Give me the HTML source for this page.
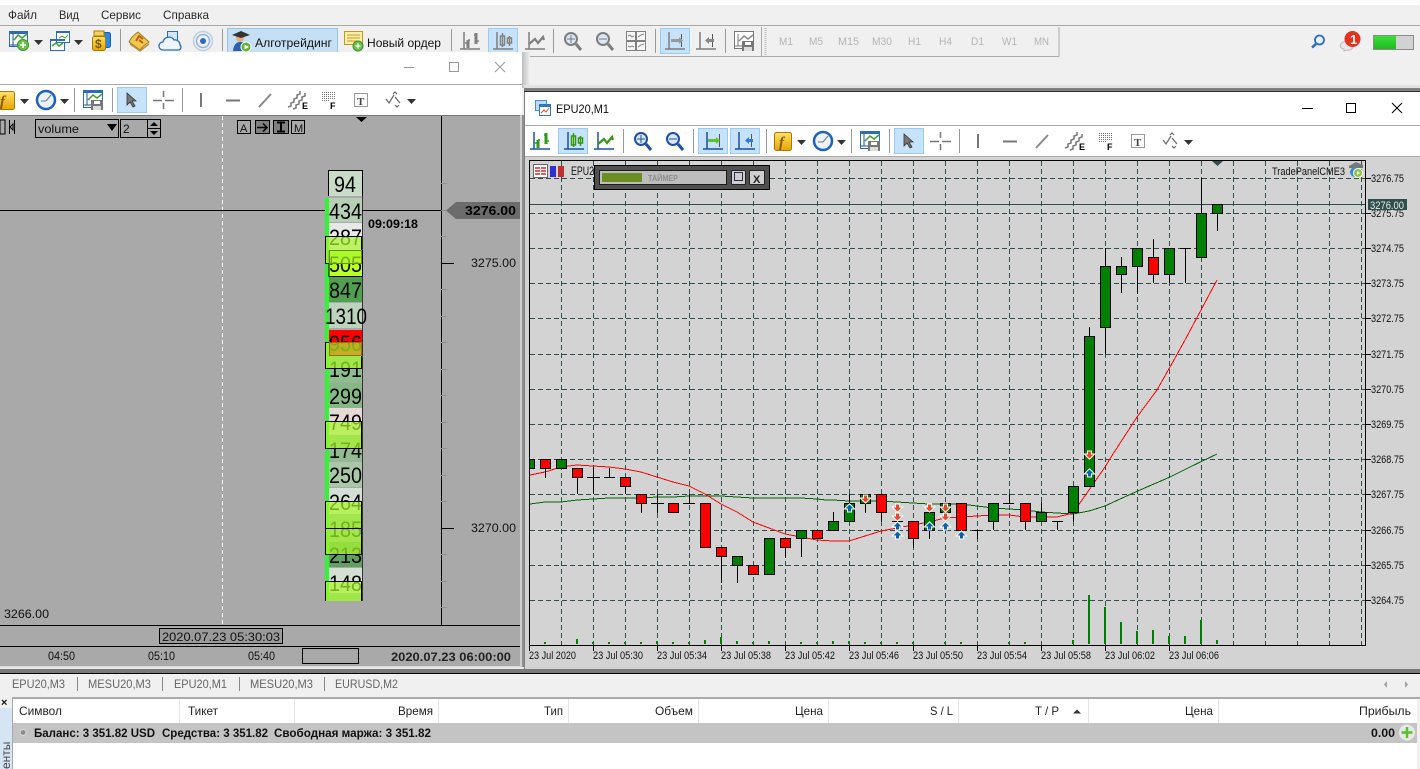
<!DOCTYPE html>
<html><head><meta charset="utf-8"><title>EPU20,M1</title>
<style>
html,body{margin:0;padding:0;background:#f0f0f0;overflow:hidden}
svg{display:block}
text{font-family:"Liberation Sans","Noto Sans CJK SC",sans-serif;font-size:12px;fill:#111}
.m{fill:#2a2a2a}
.tf{fill:#b4b4b4;font-size:11px}
.c{font-size:11px;fill:#111}
.tab{fill:#666;font-size:12px}
.l{font-size:22px;fill:#000}
.b{font-weight:bold}
.a{fill:none;stroke:var(--a)}
.g{fill:none;stroke:var(--g)}
.ic{--a:#1c50a8;--g:#2f9a12}
.dis{--a:#7d7d7d;--g:#808080}
</style></head><body>
<svg width="1420" height="769" viewBox="0 0 1420 769" xmlns="http://www.w3.org/2000/svg">
<defs>
<linearGradient id="sh" x1="0" x2="1" y1="0" y2="0"><stop offset="0" stop-color="#bdbdbd"/><stop offset="1" stop-color="#f0f0f0"/></linearGradient>
<linearGradient id="yl" x1="0" x2="0" y1="0" y2="1"><stop offset="0" stop-color="#ffe26a"/><stop offset="1" stop-color="#e8a400"/></linearGradient>
<linearGradient id="bt" x1="0" x2="0" y1="0" y2="1"><stop offset="0" stop-color="#3be03b"/><stop offset="1" stop-color="#22b822"/></linearGradient>
<clipPath id="lw"><rect x="0" y="52" width="522" height="617"/></clipPath>
<g id="i-bars"><path class="a" stroke-width="1.5" d="M4 1V18M0 18H20"/><path class="g" stroke-width="3" d="M8 9V17M16 2V13"/><path class="g" stroke-width="1.4" d="M5 12H8M8 9H10M14 4H16M16 10H19"/></g>
<g id="i-cand"><path class="a" stroke-width="1.5" d="M4 1V18M0 18H20"/><path class="g" stroke-width="1.5" d="M9.500 2V16M16.500 5V15M7.500 5h4v9h-4zM14.500 7h4v5h-4z" style="fill:#fff"/></g>
<g id="i-line"><path class="a" stroke-width="1.500" d="M4 1V18M0 18H20"/><path class="g" stroke-width="2.200" d="M4 13L10 8L13 12L18 6L19 9"/></g>
<g id="i-zp"><circle cx="7" cy="7" r="6" fill="#dbe9f7" stroke="var(--a)" stroke-width="2"/><path d="M12 12L17 18" stroke="var(--a)" stroke-width="3"/></g>
<g id="i-shift"><path class="a" stroke-width="1.500" d="M4 1V18M0 18H20"/><path stroke="#555" d="M16.500 3V16"/></g>
<g id="dn"><path d="M-1.500-3.500h3v3h2.500l-4 4-4-4h2.500z" fill="#e8482a" stroke="#fff" stroke-width="2" paint-order="stroke"/></g>
<g id="up"><path d="M-1.500 3.500h3v-3h2.500l-4-4-4 4h2.500z" fill="#0a62ad" stroke="#fff" stroke-width="2" paint-order="stroke"/></g>
<g id="tools">
<rect x="774.500" y="132.500" width="17" height="18" rx="2" fill="url(#yl)" stroke="#a87c00"/>
<path d="M797 140h9l-4.500 5z" fill="#333"/>
<circle cx="823" cy="141" r="9" fill="#eaf2fb" stroke="#1c62b8" stroke-width="2.500"/>
<path d="M823 142L828 136M823 142H818" stroke="#777" stroke-width="1" fill="none"/>
<path d="M837 140h9l-4.500 5z" fill="#333"/>
<path d="M851.500 129V153M889.500 129V153M959.500 129V153" stroke="#999"/>
<rect x="860.500" y="131.500" width="19" height="17" fill="#fff" stroke="#2b6cb8"/><rect x="860" y="131" width="20" height="3" fill="#2b6cb8"/>
<path d="M864 134V146M861 146H868" stroke="#1c50a8" fill="none"/>
<path d="M865 141L870 136L874 139L879 135" stroke="#3fa02a" stroke-width="1.500" fill="none"/>
<rect x="868" y="141" width="12" height="10" fill="#777"/><rect x="871" y="142" width="6" height="3" fill="#fff"/><rect x="870" y="147" width="8" height="4" fill="#ddd"/>
<rect x="894.500" y="128.500" width="29" height="25" fill="#c7e3fb" stroke="#96ccf6"/>
<path d="M904 134V146L907 143L910 148L912 147L909 142H913z" fill="#777" stroke="#333" stroke-width=".8"/>
<path d="M940.500 132V138M940.500 144V150M930 141.500H939M942 141.500H951" stroke="#777" stroke-width="1.500" fill="none"/>
<path d="M978 134V148" stroke="#777" stroke-width="2"/>
<path d="M1003 141.500H1017" stroke="#777" stroke-width="2"/>
<path d="M1036 148L1048 135" stroke="#888" stroke-width="2"/>
<path d="M1065 148l3-1v-3l3-1v-3l3-1v-3l3-1v-3M1070 150l3-1v-3l3-1v-3l3-1v-3l3-1v-3" stroke="#777" stroke-width="1.500" fill="none"/>
<path d="M1099 133.500h14M1099 135.500h14M1099 137.500h14M1099 139.500h14M1099 141.500h8" stroke="#777" stroke-dasharray="1 1" fill="none"/>
<rect x="1131.500" y="134.500" width="13" height="13" fill="none" stroke="#333" stroke-dasharray="1 1"/>
<path d="M1163 140l3 4 5-8M1170 135l2-2 2 2M1172 146l2 2 2-2M1172 138l5 6" stroke="#666" stroke-width="1.200" fill="none"/>
<path d="M1184 140h9l-4.500 5z" fill="#333"/>
</g>
</defs>

<rect width="1420" height="769" fill="#f0f0f0"/>
<rect width="1420" height="5" fill="#fff"/>

<!-- menu -->
<text class="m" x="8" y="19" textLength="29" lengthAdjust="spacingAndGlyphs">Файл</text>
<text class="m" x="59" y="19" textLength="20" lengthAdjust="spacingAndGlyphs">Вид</text>
<text class="m" x="101" y="19" textLength="40" lengthAdjust="spacingAndGlyphs">Сервис</text>
<text class="m" x="163" y="19" textLength="46" lengthAdjust="spacingAndGlyphs">Справка</text>
<rect y="25" width="1420" height="1" fill="#a8a8a8"/>

<!-- main toolbar -->
<g class="ic">
<rect x="9.500" y="31.500" width="18" height="15" fill="#fff" stroke="#2b6cb8"/><rect x="9" y="31" width="19" height="3" fill="#2b6cb8"/>
<path d="M13 33V46M10 45H26" stroke="#1c50a8" fill="none"/><path d="M14 40L18 35L22 38L27 34" stroke="#3fa02a" stroke-width="1.500" fill="none"/>
<circle cx="23" cy="45" r="5.500" fill="#6cc24a" stroke="#3f8f2a"/><path d="M23 42V48M20 45H26" stroke="#fff" stroke-width="1.500"/>
<path d="M34 40h9l-4.500 5z" fill="#333"/>
<rect x="50.500" y="39.500" width="14" height="11" fill="#fff" stroke="#2b6cb8"/><rect x="56.500" y="31.500" width="13" height="11" fill="#fff" stroke="#2b6cb8"/><rect x="50" y="39" width="15" height="2" fill="#2b6cb8"/><rect x="56" y="31" width="14" height="2" fill="#2b6cb8"/>
<path d="M52 46L56 43L59 46L63 43" stroke="#3fa02a" stroke-width="1.500" fill="none"/><path d="M59 38L62 36L65 38L68 35" stroke="#3fa02a" fill="none"/>
<path d="M74 40h9l-4.500 5z" fill="#333"/>
<rect x="99.500" y="32.500" width="11" height="15" rx="2" fill="#2a8ae0" stroke="#1c5fa8"/>
<rect x="92.500" y="36.500" width="13" height="14" rx="2" fill="url(#yl)" stroke="#a87c00"/><text x="95" y="48" class="b" style="font-size:12px;fill:#7a5a00">$</text>
<rect x="94" y="31" width="10" height="5" fill="#f3cf6a" stroke="#a87c00"/>
<path d="M120.500 29V51" stroke="#999"/>
<path d="M129 42Q131 37 138 32L149 42Q143 46 140 50z" fill="#f0c850" stroke="#9a7a20"/><path d="M130 44L140 51L149 44" stroke="#b89048" stroke-width="1.500" fill="none"/><path d="M136 41L139 36L143 39M139 40L143 43" stroke="#c05a10" stroke-width="1.800" fill="none"/>
<rect x="167.500" y="31.500" width="10" height="13" fill="#d3e6f8" stroke="#2b6cb8"/><path d="M163 50a4 4 0 0 1 0-8a6 6 0 0 1 11-2a5 5 0 0 1 6 5a3 3 0 0 1-1 5z" fill="#eef5fc" stroke="#2b6cb8" stroke-width="1.300"/>
<circle cx="203" cy="41" r="9.500" fill="none" stroke="#b8cfe8" stroke-width="1.500"/><circle cx="203" cy="41" r="6.500" fill="none" stroke="#8fb3da" stroke-width="1.500"/><circle cx="203" cy="41" r="3" fill="#2b6cb8"/>
<path d="M222.500 29V51" stroke="#999"/>
<rect x="227.500" y="28.500" width="110" height="24" fill="#c5dff4" stroke="#94c6ec"/>
<path d="M233 51q1-9 7-9t8 6v3z" fill="#2b5fb0"/><circle cx="240" cy="38" r="4" fill="#e0b080"/><path d="M232 35L241 31L250 35L241 38z" fill="#333"/>
<circle cx="246" cy="47" r="5" fill="#5fb52a" stroke="#fff"/><path d="M244.500 44.500L249 47L244.500 49.500z" fill="#fff"/>
<text x="255" y="47" textLength="77" lengthAdjust="spacingAndGlyphs" style="fill:#111">Алготрейдинг</text>
<rect x="344.500" y="31.500" width="18" height="13" fill="#fff0a8" stroke="#c09a20"/><path d="M347 35h13M347 38h13M347 41h10" stroke="#c89a20"/>
<circle cx="358" cy="46" r="5" fill="#6cc24a" stroke="#3f8f2a"/><path d="M358 43.500V48.500M355.500 46H360.500" stroke="#fff" stroke-width="1.300"/>
<text x="367" y="47" textLength="74" lengthAdjust="spacingAndGlyphs" style="fill:#111">Новый ордер</text>
<path d="M451.500 29V51M553.500 29V53M655.500 29V53M725.500 29V53" stroke="#999"/>
<g class="dis">
<use href="#i-bars" x="460" y="31"/>
<rect x="488.500" y="28.500" width="29" height="25" fill="#c7e3fb" stroke="#96ccf6"/>
<use href="#i-cand" x="493" y="31"/>
<use href="#i-line" x="525" y="31"/>
<use href="#i-zp" x="564" y="32"/><path d="M571 35V43M567 39H575" stroke="#777"/>
<use href="#i-zp" x="596" y="32"/><path d="M599 39H607" stroke="#777"/>
<g fill="#f6f6f6" stroke="#808080"><rect x="626.500" y="31.500" width="9" height="9"/><rect x="636.500" y="31.500" width="9" height="9"/><rect x="626.500" y="41.500" width="9" height="9"/><rect x="636.500" y="41.500" width="9" height="9"/></g>
<path d="M628 36l2-1 2 2 2-1M638 37l3-2 3-1M628 46l2 1 2-1 2 1M638 47l3-2 3-1" stroke="#888" fill="none"/>
<rect x="660.500" y="28.500" width="29" height="25" fill="#c7e3fb" stroke="#96ccf6"/>
<use href="#i-shift" x="665" y="31"/><path d="M671 39h8v-2l4 3.500-4 3.500v-2h-8z" fill="#999"/>
<use href="#i-shift" x="696" y="31"/><path d="M714 39h-5v-2l-4 3.500 4 3.500v-2h5z" fill="#888"/>
<rect x="734.500" y="31.500" width="19" height="17" fill="#fff" stroke="#777"/><path d="M738 34V46M735 46H742" stroke="#777"/><path d="M739 41L744 36L748 39L753 35" stroke="#888" stroke-width="1.500" fill="none"/><rect x="742" y="41" width="12" height="10" fill="#777"/><rect x="745" y="42" width="6" height="3" fill="#fff"/><rect x="744" y="47" width="8" height="4" fill="#ddd"/>
</g>
</g>
<path d="M765.500 28V55" stroke="#bbb" stroke-dasharray="1 1" stroke-width="2"/>
<path d="M761.500 27V56M1059 27V56.500" stroke="#aaa" fill="none"/>
<rect y="56" width="1059" height="1" fill="#aaa"/>
<text class="tf" x="779" y="45" textLength="14" lengthAdjust="spacingAndGlyphs">M1</text><text class="tf" x="809" y="45" textLength="14" lengthAdjust="spacingAndGlyphs">M5</text><text class="tf" x="838" y="45" textLength="21" lengthAdjust="spacingAndGlyphs">M15</text><text class="tf" x="872" y="45" textLength="20" lengthAdjust="spacingAndGlyphs">M30</text><text class="tf" x="908" y="45" textLength="13" lengthAdjust="spacingAndGlyphs">H1</text><text class="tf" x="939" y="45" textLength="13" lengthAdjust="spacingAndGlyphs">H4</text><text class="tf" x="971" y="45" textLength="13" lengthAdjust="spacingAndGlyphs">D1</text><text class="tf" x="1002" y="45" textLength="15" lengthAdjust="spacingAndGlyphs">W1</text><text class="tf" x="1034" y="45" textLength="15" lengthAdjust="spacingAndGlyphs">MN</text>
<circle cx="1319.500" cy="40" r="4.500" fill="#eaf2fb" stroke="#2b6cc8" stroke-width="1.800"/><path d="M1316 44L1312 47.500" stroke="#2b6cc8" stroke-width="2.500"/>
<path d="M1340 46a8 6 0 0 1 14-3a6 6 0 0 1-7 7l-3 1v-2a5 5 0 0 1-4-3z" fill="#e8e8e8" stroke="#bbb"/>
<circle cx="1352.500" cy="39" r="8" fill="#e4321c"/><text x="1350" y="44" class="b" style="font-size:13px;fill:#fff">1</text>
<rect x="1373.500" y="35.500" width="40" height="14" fill="#d2d2d2" stroke="#8a8a8a"/><rect x="1374" y="36" width="22" height="13" fill="url(#bt)"/>

<!-- shadows -->
<rect x="522" y="52" width="8" height="36" fill="url(#sh)"/>
<rect x="524" y="85" width="896" height="3" fill="#e2e2e2"/>

<!-- LEFT WINDOW -->
<g clip-path="url(#lw)">
<rect x="0" y="52" width="522" height="32" fill="#fff"/>
<rect x="0" y="84" width="522" height="1" fill="#aaa"/>
<rect x="0" y="85" width="522" height="30" fill="#fff"/>
<path d="M404 67.500H414" stroke="#999"/><rect x="449.500" y="62.500" width="9" height="9" fill="none" stroke="#999"/><path d="M495 62L505 72M505 62L495 72" stroke="#999"/>
<rect x="0" y="115" width="522" height="553" fill="#a9a9a9"/>
<rect x="0" y="115" width="522" height="1" fill="#777"/>
<g class="ic" transform="translate(-777,-41)"><use href="#tools"/></g>
<text x="0" y="106" style="font:italic bold 15px 'Liberation Serif',serif;fill:#8a5a00">f</text>
<text x="302" y="109" class="b" style="font-size:9px;fill:#000">E</text><text x="330" y="109" class="b" style="font-size:9px;fill:#000">F</text>
<text x="357" y="105" class="b" style="font:bold 11px 'Liberation Serif',serif;fill:#444">T</text>

<!-- top left controls -->
<rect x="0" y="120" width="5" height="14" fill="none" stroke="#000"/><path d="M9.500 120V134M14.500 120V134M13 124l-3 3 3 3z" stroke="#000" fill="none"/>
<rect x="35.500" y="119.500" width="83" height="18" fill="#a9a9a9" stroke="#000"/>
<text x="38" y="133" textLength="41" lengthAdjust="spacingAndGlyphs" style="font-size:12px;fill:#111">volume</text>
<path d="M107 124h10l-5 7z" fill="#000"/>
<rect x="120.500" y="119.500" width="40" height="18" fill="#a9a9a9" stroke="#000"/>
<text x="123" y="133" style="font-size:12px;fill:#111">2</text>
<path d="M147.500 120V137M148 128.500H160" stroke="#000"/><path d="M150 126l4-4 4 4zM150 131l4 4 4-4z" fill="#000"/>
<g fill="#a9a9a9" stroke="#000"><rect x="237.500" y="120.500" width="13" height="13"/><rect x="255.500" y="120.500" width="14" height="13" fill="#808080"/><rect x="273.500" y="120.500" width="15" height="13" fill="#808080"/><rect x="291.500" y="120.500" width="13" height="13"/></g>
<text x="240" y="132" style="font-size:11px;fill:#111">A</text>
<path d="M257 127.500H267M263 123.500l4 4-4 4" stroke="#000" stroke-width="1.500" fill="none"/>
<path d="M277 122.500H285M277 131.500H285M281 122.500V131.500" stroke="#000" stroke-width="2" fill="none"/>
<text x="294" y="132" style="font-size:11px;fill:#111">M</text>
<path d="M356 117h11l-5.500 5z" fill="#000"/>

<path d="M222.500 116V625" stroke="#fff" stroke-dasharray="4 3"/>
<rect x="0" y="210" width="441" height="1" fill="#000"/>
<rect x="441" y="116" width="1" height="509" fill="#000"/>
<path d="M441 263.500H454M441 528.500H454" stroke="#000"/>
<path d="M441 183.500h6M441 210.500h6M441 236.500h6M441 289.500h6M441 316.500h6M441 342.500h6M441 369.500h6M441 395.500h6M441 422.500h6M441 448.500h6M441 475.500h6M441 501.500h6M441 554.500h6M441 581.500h6M441 607.500h6" stroke="#8f8f8f"/>
<path d="M446 210.500L456 202H520V219H456z" fill="#6c6c6c"/>
<text x="465" y="215" textLength="51" lengthAdjust="spacingAndGlyphs" class="b" style="font-size:13px;fill:#000">3276.00</text>
<text x="368" y="228" textLength="50" lengthAdjust="spacingAndGlyphs" class="b" style="font-size:12px;fill:#000">09:09:18</text>
<text x="471" y="267" textLength="45" lengthAdjust="spacingAndGlyphs" style="fill:#111">3275.00</text>
<text x="471" y="532" textLength="45" lengthAdjust="spacingAndGlyphs" style="fill:#111">3270.00</text>
<text x="4" y="618" textLength="45" lengthAdjust="spacingAndGlyphs" style="fill:#111">3266.00</text>

<!-- ladder -->
<rect x="325" y="198" width="4" height="403" fill="#33f433"/>
<g>
<rect x="329" y="171" width="33" height="25" fill="#c8dcc8"/>
<rect x="329" y="198" width="33" height="24" fill="#b5d0b5"/>
<rect x="329" y="223" width="33" height="27" fill="#e8e8e8"/>
<rect x="329" y="250" width="33" height="26" fill="#b8ff24"/>
<rect x="329" y="277" width="33" height="25" fill="#50a050"/>
<rect x="329" y="303" width="33" height="25" fill="#bcd4bc"/>
<rect x="329" y="330" width="33" height="25" fill="#ff0000"/>
<rect x="329" y="356" width="33" height="26" fill="#8dbe8d"/>
<rect x="329" y="383" width="33" height="25" fill="#86b886"/>
<rect x="329" y="408" width="33" height="27" fill="#e8d8d8"/>
<rect x="329" y="436" width="33" height="25" fill="#90bc90"/>
<rect x="329" y="462" width="33" height="25" fill="#a8c8a8"/>
<rect x="329" y="488" width="33" height="26" fill="#d5e0d5"/>
<rect x="329" y="515" width="33" height="26" fill="#8dbe8d"/>
<rect x="329" y="542" width="33" height="25" fill="#5fa25f"/>
<rect x="329" y="568" width="33" height="25" fill="#d5e0d5"/>
<rect x="329" y="594" width="33" height="7" fill="#8dbe8d"/>
</g>
<path d="M328.500 196V170.500H362.500V196M329 250.500V276.500H362.500V250" fill="none" stroke="#000"/>
<path d="M362.500 196V601" stroke="#000" stroke-opacity=".7"/>
<text class="l" x="334" y="192" textLength="22" lengthAdjust="spacingAndGlyphs">94</text>
<text class="l" x="329" y="219" textLength="33" lengthAdjust="spacingAndGlyphs">434</text>
<text class="l" x="329" y="245" textLength="33" lengthAdjust="spacingAndGlyphs">287</text>
<text class="l" x="329" y="272" textLength="33" lengthAdjust="spacingAndGlyphs">505</text>
<text class="l" x="329" y="298" textLength="33" lengthAdjust="spacingAndGlyphs">847</text>
<text class="l" x="325" y="324" textLength="42" lengthAdjust="spacingAndGlyphs">1310</text>
<text class="l" x="329" y="351" textLength="33" lengthAdjust="spacingAndGlyphs">956</text>
<text class="l" x="329" y="377" textLength="33" lengthAdjust="spacingAndGlyphs">191</text>
<text class="l" x="329" y="404" textLength="33" lengthAdjust="spacingAndGlyphs">299</text>
<text class="l" x="329" y="430" textLength="33" lengthAdjust="spacingAndGlyphs">749</text>
<text class="l" x="329" y="458" textLength="33" lengthAdjust="spacingAndGlyphs">174</text>
<text class="l" x="329" y="483" textLength="33" lengthAdjust="spacingAndGlyphs">250</text>
<text class="l" x="329" y="510" textLength="33" lengthAdjust="spacingAndGlyphs">264</text>
<text class="l" x="329" y="537" textLength="33" lengthAdjust="spacingAndGlyphs">185</text>
<text class="l" x="329" y="563" textLength="33" lengthAdjust="spacingAndGlyphs">213</text>
<text class="l" x="329" y="591" textLength="33" lengthAdjust="spacingAndGlyphs">148</text>
<text class="l" x="329" y="617" textLength="33" lengthAdjust="spacingAndGlyphs">183</text>
<rect x="300" y="601" width="80" height="24" fill="#a9a9a9"/>
<g fill="#a8f82e" fill-opacity=".7" stroke="#000">
<rect x="325.500" y="236.500" width="36" height="27"/>
<rect x="325.500" y="342.500" width="36" height="26"/>
<rect x="325.500" y="421.500" width="36" height="27"/>
<rect x="325.500" y="501.500" width="36" height="27"/>
<rect x="325.500" y="528.500" width="36" height="26"/>
</g>
<rect x="326" y="582" width="36" height="19" fill="#a8f82e" fill-opacity=".7"/>
<path d="M325.500 601V581.500H361.500V601" fill="none" stroke="#000"/>
<rect x="329.500" y="250.500" width="32" height="13" fill="none" stroke="#6e8a10"/>
<rect x="329.500" y="342.500" width="32" height="13" fill="none" stroke="#a06a10"/>

<!-- left bottom -->
<rect x="0" y="625" width="522" height="1" fill="#000"/>
<rect x="0" y="646" width="522" height="1" fill="#000"/>
<rect x="159.500" y="628.500" width="123" height="15" fill="#9a9a9a" stroke="#000"/>
<text x="162" y="641" textLength="118" lengthAdjust="spacingAndGlyphs" style="fill:#111">2020.07.23 05:30:03</text>
<text x="48" y="660" textLength="27" lengthAdjust="spacingAndGlyphs" style="fill:#111">04:50</text>
<text x="148" y="660" textLength="27" lengthAdjust="spacingAndGlyphs" style="fill:#111">05:10</text>
<text x="248" y="660" textLength="27" lengthAdjust="spacingAndGlyphs" style="fill:#111">05:40</text>
<rect x="302.500" y="648.500" width="56" height="15" fill="none" stroke="#000"/>
<text x="391" y="661" textLength="120" lengthAdjust="spacingAndGlyphs" class="b" style="font-size:12px;fill:#222">2020.07.23 06:00:00</text>
<rect x="0" y="666" width="522" height="3" fill="#d8d8d8"/>
<rect x="520" y="115" width="2" height="553" fill="#cfcfcf"/>
</g>
<rect x="522" y="115" width="2" height="554" fill="#8f8f8f"/>

<!-- RIGHT WINDOW -->
<rect x="524" y="88" width="896" height="3" fill="#808080"/>
<rect x="524" y="91" width="896" height="1" fill="#333"/>
<rect x="524" y="92" width="896" height="577" fill="#fff"/>
<rect x="524" y="92" width="1" height="577" fill="#808080"/>
<rect x="525" y="125" width="895" height="1" fill="#aaa"/>
<rect x="525" y="156" width="895" height="1" fill="#aaa"/>
<rect x="525" y="157" width="895" height="512" fill="#d3d3d3"/>
<rect x="535.500" y="100.500" width="11" height="10" fill="#bcdcf6" stroke="#4a90d0"/><rect x="539.500" y="104.500" width="11" height="11" fill="#fff" stroke="#2b78c8"/><rect x="539" y="104" width="12" height="3" fill="#2b78c8"/><path d="M541 113l3-3 2 2 3-4" stroke="#e8502a" fill="none"/>
<text x="556" y="113" textLength="53" lengthAdjust="spacingAndGlyphs" style="fill:#111">EPU20,M1</text>
<path d="M1302 108.500H1313" stroke="#000"/><rect x="1346.500" y="103.500" width="9" height="9" fill="none" stroke="#000"/><path d="M1392 103L1402 113M1402 103L1392 113" stroke="#000"/>

<g class="ic">
<use href="#i-bars" x="530" y="131"/>
<rect x="558.500" y="128.500" width="29" height="25" fill="#c7e3fb" stroke="#96ccf6"/>
<use href="#i-cand" x="564" y="131"/>
<use href="#i-line" x="594" y="131"/>
<path d="M623.500 129V153M693.500 129V153M766.500 129V153" stroke="#999"/>
<use href="#i-zp" x="634" y="132"/><path d="M641 135V143M637 139H645" stroke="#1c50a8"/>
<use href="#i-zp" x="666" y="132"/><path d="M669 139H677" stroke="#1c50a8"/>
<rect x="698.500" y="128.500" width="29" height="25" fill="#c7e3fb" stroke="#96ccf6"/>
<use href="#i-shift" x="703" y="131"/><path d="M708 139h8v-2l4 3.500-4 3.500v-2h-8z" fill="#5cc22a"/>
<rect x="730.500" y="128.500" width="29" height="25" fill="#c7e3fb" stroke="#96ccf6"/>
<use href="#i-shift" x="735" y="131"/><path d="M753 139h-4v-2l-4 3.500 4 3.500v-2h4z" fill="#2b7ce0"/>
<use href="#tools"/>
</g>
<text x="779" y="147" style="font:italic bold 15px 'Liberation Serif',serif;fill:#8a5a00">f</text>
<text x="1079" y="150" class="b" style="font-size:9px;fill:#000">E</text><text x="1107" y="150" class="b" style="font-size:9px;fill:#000">F</text>
<text x="1134" y="146" class="b" style="font:bold 11px 'Liberation Serif',serif;fill:#444">T</text>

<!-- chart -->
<g shape-rendering="crispEdges">
<path stroke="#2f4f4f" stroke-dasharray="5 3" fill="none" d="M530 178.500H1365M530 213.500H1365M530 248.500H1365M530 283.500H1365M530 318.500H1365M530 354.500H1365M530 389.500H1365M530 424.500H1365M530 459.500H1365M530 494.500H1365M530 530.500H1365M530 565.500H1365M530 600.500H1365M561.500 161V645M593.500 161V645M625.500 161V645M657.500 161V645M689.500 161V645M721.500 161V645M753.500 161V645M785.500 161V645M817.500 161V645M849.500 161V645M881.500 161V645M913.500 161V645M945.500 161V645M977.500 161V645M1009.500 161V645M1041.500 161V645M1073.500 161V645M1105.500 161V645M1137.500 161V645M1169.500 161V645M1201.500 161V645M1233.500 161V645M1265.500 161V645M1297.500 161V645M1329.500 161V645M1361.500 161V645"/>
<path stroke="#2f4f4f" d="M530 204.500H1365"/>
<path stroke="#000" fill="none" d="M529.500 160.500H1365.500V645.500H529.500z"/>
<path stroke="#000" d="M1365 178.500h6M1365 213.500h6M1365 248.500h6M1365 283.500h6M1365 318.500h6M1365 354.500h6M1365 389.500h6M1365 424.500h6M1365 459.500h6M1365 494.500h6M1365 530.500h6M1365 565.500h6M1365 600.500h6M529.500 645v6M593.500 645v6M657.500 645v6M721.500 645v6M785.500 645v6M849.500 645v6M913.500 645v6M977.500 645v6M1041.500 645v6M1105.500 645v6M1169.500 645v6"/>
<!-- volumes -->
<path stroke="#008000" stroke-width="2" d="M545 644v-2M577 644v-5M593 644v-2M609 644v-2M625 644v-2M641 644v-2M657 644v-3M673 644v-2M689 644v-2M705 644v-4M721 644v-7M737 644v-3M753 644v-2M769 644v-3M801 644v-2M817 644v-2M833 644v-3M849 644v-3M865 644v-2M881 644v-2M897 644v-2M913 644v-2M945 644v-2M961 644v-2M1009 644v-2M1025 644v-2M1073 644v-4M1089 644V595M1105 644V607M1121 644V622M1137 644V631M1153 644V630M1169 644V636M1185 644V636M1201 644V620M1217 644V640"/>
</g>
<!-- MAs -->
<polyline fill="none" stroke="#006400" shape-rendering="crispEdges" points="530,504 545,502 561,502 577,500 593,499 609,498 625,498 641,498 657,497 673,497 689,496 705,496 721,496 737,497 753,498 769,498 785,498 801,498 817,499 826,500 833,500 849,501 865,501 881,501 897,502 913,503 929,504 945,504 961,504 977,506 993,508 1009,509 1025,510 1041,512 1057,513 1073,514 1089,511 1105,506 1120,499 1140,490 1170,477 1190,467 1217,454"/>
<polyline fill="none" stroke="#ff0000" shape-rendering="crispEdges" points="530,475 545,472 561,467 577,465 593,466 609,467 625,469 641,472 657,477 673,482 689,486 705,494 721,504 737,512 753,522 769,528 785,534 801,537 817,540 833,541 849,541 865,536 881,531 897,528 913,525 929,522 945,518 961,517 977,516 993,515 1009,515 1025,517 1041,517 1057,517 1073,513 1089,490 1105,467 1113,454 1137,417 1157,390 1170,367 1185,340 1201,310 1217,280"/>
<g shape-rendering="crispEdges">
<path stroke="#000" fill="none" d="M545.500 468V478M577.500 477V494M593.500 467V494M587 477.500H600M609.500 468V477M604 477.500H615M625.500 486V494M641.500 503V513M657.500 494V513M651 503.500H664M689.500 494V503M683 503.500H695M721.500 556V583M737.500 565V583M785.500 547V558M801.500 538V557M833.500 512V521M849.500 494V503M865.500 503V513M881.500 512V522M892 521.500H903M913.500 538V548M929.500 530V539M977.500 530V539M972 530.500H983M993.500 521V530M1009.500 494V503M1003 503.500H1014M1025.500 521V530M1041.500 502V512M1057.500 521V530M1052 521.500H1063M1073.500 512V522M1089.500 327V336M1105.500 248V266M1105.500 327V354M1121.500 257V266M1121.500 274V293M1137.500 266V294M1153.500 239V257M1153.500 274V283M1169.500 274V283M1185.500 248V283M1180 248.500H1191M1201.500 178V213M1217.500 213V231"/>
<path stroke="#000" fill="#ff0000" d="M540.500 459.500h10v9h-10zM572.500 468.500h10v9h-10zM620.500 477.500h10v9h-10zM636.500 494.500h10v9h-10zM668.500 503.500h10v9h-10zM700.500 503.500h10v44h-10zM716.500 547.500h10v9h-10zM748.500 565.500h10v9h-10zM780.500 538.500h10v9h-10zM812.500 530.500h10v8h-10zM876.500 494.500h10v18h-10zM908.500 521.500h10v17h-10zM956.500 503.500h10v27h-10zM1020.500 503.500h10v18h-10zM1148.500 257.500h10v17h-10z"/>
<path stroke="#000" fill="#008000" d="M529.500 459.500h5v9h-5zM556.500 459.500h10v9h-10zM732.500 556.500h10v9h-10zM764.500 538.500h10v36h-10zM796.500 530.500h10v8h-10zM828.500 521.500h10v9h-10zM844.500 503.500h10v18h-10zM860.500 494.500h10v9h-10zM924.500 512.500h10v18h-10zM940.500 503.500h10v9h-10zM988.500 503.500h10v18h-10zM1036.500 512.500h10v9h-10zM1068.500 486.500h10v26h-10zM1084.500 336.500h10v150h-10zM1100.500 266.500h10v61h-10zM1116.500 266.500h10v8h-10zM1132.500 248.500h10v18h-10zM1164.500 248.500h10v26h-10zM1196.500 213.500h10v44h-10zM1212.500 204.500h10v9h-10z"/>
</g>
<use href="#up" x="849.500" y="508"/>
<use href="#dn" x="865.500" y="499"/>
<use href="#dn" x="897.500" y="508"/><use href="#dn" x="897.500" y="517"/><use href="#up" x="897.500" y="526"/><use href="#up" x="897.500" y="535"/>
<use href="#dn" x="929.500" y="508"/><use href="#up" x="929.500" y="526"/>
<use href="#dn" x="945.500" y="508"/><use href="#dn" x="945.500" y="517"/><use href="#up" x="945.500" y="526"/>
<use href="#up" x="961.500" y="535"/>
<use href="#dn" x="1089.500" y="455"/><use href="#up" x="1089.500" y="473"/>

<!-- price axis -->
<text class="c" x="1371" y="182" textLength="33" lengthAdjust="spacingAndGlyphs">3276.75</text>
<text class="c" x="1371" y="217" textLength="33" lengthAdjust="spacingAndGlyphs">3275.75</text>
<text class="c" x="1371" y="252" textLength="33" lengthAdjust="spacingAndGlyphs">3274.75</text>
<text class="c" x="1371" y="287" textLength="33" lengthAdjust="spacingAndGlyphs">3273.75</text>
<text class="c" x="1371" y="322" textLength="33" lengthAdjust="spacingAndGlyphs">3272.75</text>
<text class="c" x="1371" y="358" textLength="33" lengthAdjust="spacingAndGlyphs">3271.75</text>
<text class="c" x="1371" y="393" textLength="33" lengthAdjust="spacingAndGlyphs">3270.75</text>
<text class="c" x="1371" y="428" textLength="33" lengthAdjust="spacingAndGlyphs">3269.75</text>
<text class="c" x="1371" y="463" textLength="33" lengthAdjust="spacingAndGlyphs">3268.75</text>
<text class="c" x="1371" y="498" textLength="33" lengthAdjust="spacingAndGlyphs">3267.75</text>
<text class="c" x="1371" y="534" textLength="33" lengthAdjust="spacingAndGlyphs">3266.75</text>
<text class="c" x="1371" y="569" textLength="33" lengthAdjust="spacingAndGlyphs">3265.75</text>
<text class="c" x="1371" y="604" textLength="33" lengthAdjust="spacingAndGlyphs">3264.75</text>
<rect x="1368" y="199" width="39" height="11" fill="#2f4f4f"/>
<text x="1370" y="209" textLength="34" lengthAdjust="spacingAndGlyphs" style="font-size:11px;fill:#e8e8e8">3276.00</text>
<!-- time axis -->
<text class="c" x="529" y="659" textLength="47" lengthAdjust="spacingAndGlyphs">23 Jul 2020</text>
<text class="c" x="593" y="659" textLength="50" lengthAdjust="spacingAndGlyphs">23 Jul 05:30</text>
<text class="c" x="657" y="659" textLength="50" lengthAdjust="spacingAndGlyphs">23 Jul 05:34</text>
<text class="c" x="721" y="659" textLength="50" lengthAdjust="spacingAndGlyphs">23 Jul 05:38</text>
<text class="c" x="785" y="659" textLength="50" lengthAdjust="spacingAndGlyphs">23 Jul 05:42</text>
<text class="c" x="849" y="659" textLength="50" lengthAdjust="spacingAndGlyphs">23 Jul 05:46</text>
<text class="c" x="913" y="659" textLength="50" lengthAdjust="spacingAndGlyphs">23 Jul 05:50</text>
<text class="c" x="977" y="659" textLength="50" lengthAdjust="spacingAndGlyphs">23 Jul 05:54</text>
<text class="c" x="1041" y="659" textLength="50" lengthAdjust="spacingAndGlyphs">23 Jul 05:58</text>
<text class="c" x="1105" y="659" textLength="50" lengthAdjust="spacingAndGlyphs">23 Jul 06:02</text>
<text class="c" x="1169" y="659" textLength="50" lengthAdjust="spacingAndGlyphs">23 Jul 06:06</text>

<!-- chart overlays -->
<rect x="533.500" y="164.500" width="14" height="13" fill="#fff" stroke="#666"/><path d="M535 168h5M541 168h5M535 171h5M541 171h5M535 174h5M541 174h5" stroke="#e0605a" stroke-width="2"/>
<rect x="550" y="166" width="6" height="11" fill="#3030d0"/><rect x="558" y="166" width="6" height="11" fill="#c03030"/>
<text x="571" y="175" textLength="23" lengthAdjust="spacingAndGlyphs" style="fill:#111">EPU2</text>
<rect x="594.500" y="165.500" width="175" height="24" fill="#505050" stroke="#000"/>
<rect x="599.500" y="170.500" width="127" height="14" fill="#bdbdbd" stroke="#1a1a1a"/>
<rect x="602" y="173" width="40" height="9" fill="#6b8e23"/>
<text x="648" y="181" textLength="30" lengthAdjust="spacingAndGlyphs" class="b" style="font-size:8px;fill:#8c8c8c">ТАЙМЕР</text>
<rect x="731.500" y="170.500" width="14" height="14" rx="1" fill="#cfcfcf" stroke="#222"/><rect x="734.500" y="172.500" width="8" height="8" fill="none" stroke="#2a2a50"/>
<rect x="749.500" y="170.500" width="15" height="14" rx="1" fill="#cfcfcf" stroke="#222"/>
<text x="753" y="183" class="b" style="font-size:11px;fill:#222">X</text>
<path d="M1212 161h11l-5.500 5z" fill="#2f4f4f"/>
<text x="1272" y="175" textLength="73" lengthAdjust="spacingAndGlyphs" style="font-size:11px;fill:#111">TradePanelCME3</text>
<path d="M1349 166l7-4 7 3v3h-14z" fill="#777"/><circle cx="1355" cy="172" r="5" fill="#3a8ad0"/><circle cx="1358" cy="173" r="4.500" fill="#8cc63f" stroke="#fff"/><path d="M1357 171l3 2-3 2z" fill="#fff"/>

<!-- bottom -->
<rect x="0" y="669" width="1420" height="4" fill="#7a7a7a"/>
<rect x="0" y="667" width="524" height="2" fill="#e8e8e8"/>
<rect x="0" y="673" width="1420" height="1" fill="#000"/>
<rect x="0" y="674" width="1420" height="95" fill="#f0f0f0"/>
<text class="tab" x="12" y="688" textLength="53" lengthAdjust="spacingAndGlyphs">EPU20,M3</text>
<path d="M77.500 677V691M162.500 677V691M239.500 677V691M324.500 677V691" stroke="#888"/>
<text class="tab" x="88" y="688" textLength="63" lengthAdjust="spacingAndGlyphs">MESU20,M3</text>
<text class="tab" x="174" y="688" textLength="53" lengthAdjust="spacingAndGlyphs">EPU20,M1</text>
<text class="tab" x="250" y="688" textLength="63" lengthAdjust="spacingAndGlyphs">MESU20,M3</text>
<text class="tab" x="335" y="688" textLength="63" lengthAdjust="spacingAndGlyphs">EURUSD,M2</text>
<path d="M1387 681v7l-3-3.500zM1405 681v7l3-3.500z" fill="#a0a0a0"/>
<rect x="0" y="708" width="12" height="61" fill="#d6e5f4"/>
<text x="1" y="706" class="b" style="font-size:11px;fill:#111">×</text>
<text transform="translate(10,769) rotate(-90)" style="font-size:12px;fill:#444">енты</text>
<rect x="12" y="698" width="1405" height="71" fill="#fff"/>
<path d="M12.500 698V769" stroke="#aaa"/>
<rect x="12" y="697" width="1408" height="2" fill="#aaa"/>
<path d="M179.500 699V723M294.500 699V723M438.500 699V723M568.500 699V723M698.500 699V723M828.500 699V723M958.500 699V723M1088.500 699V723M1218.500 699V723" stroke="#e4e4e4"/>
<text x="19" y="715" textLength="43" lengthAdjust="spacingAndGlyphs" style="fill:#222">Символ</text>
<text x="188" y="715" textLength="30" lengthAdjust="spacingAndGlyphs" style="fill:#222">Тикет</text>
<text x="398" y="715" textLength="35" lengthAdjust="spacingAndGlyphs" style="fill:#222">Время</text>
<text x="544" y="715" textLength="19" lengthAdjust="spacingAndGlyphs" style="fill:#222">Тип</text>
<text x="655" y="715" textLength="38" lengthAdjust="spacingAndGlyphs" style="fill:#222">Объем</text>
<text x="795" y="715" textLength="28" lengthAdjust="spacingAndGlyphs" style="fill:#222">Цена</text>
<text x="930" y="715" textLength="23" lengthAdjust="spacingAndGlyphs" style="fill:#222">S / L</text>
<text x="1035" y="715" textLength="24" lengthAdjust="spacingAndGlyphs" style="fill:#222">T / P</text>
<path d="M1073 713.500l4-4 4 4z" fill="#333"/>
<text x="1185" y="715" textLength="28" lengthAdjust="spacingAndGlyphs" style="fill:#222">Цена</text>
<text x="1359" y="715" textLength="52" lengthAdjust="spacingAndGlyphs" style="fill:#222">Прибыль</text>
<rect x="13" y="723" width="1404" height="20" fill="#c4c4c4"/>
<circle cx="23" cy="732.500" r="3" fill="#8e8e8e" stroke="#ddd"/>
<text x="34" y="737" textLength="121" lengthAdjust="spacingAndGlyphs" class="b" style="fill:#111">Баланс: 3 351.82 USD</text>
<text x="162" y="737" textLength="106" lengthAdjust="spacingAndGlyphs" class="b" style="fill:#111">Средства: 3 351.82</text>
<text x="274" y="737" textLength="157" lengthAdjust="spacingAndGlyphs" class="b" style="fill:#111">Свободная маржа: 3 351.82</text>
<text x="1371" y="737" textLength="24" lengthAdjust="spacingAndGlyphs" class="b" style="fill:#111">0.00</text>
<circle cx="1407" cy="732.500" r="8" fill="#e8e8e8"/><path d="M1407 727V738M1401.500 732.500H1412.500" stroke="#58c02a" stroke-width="2.500"/>
</svg>
</body></html>
